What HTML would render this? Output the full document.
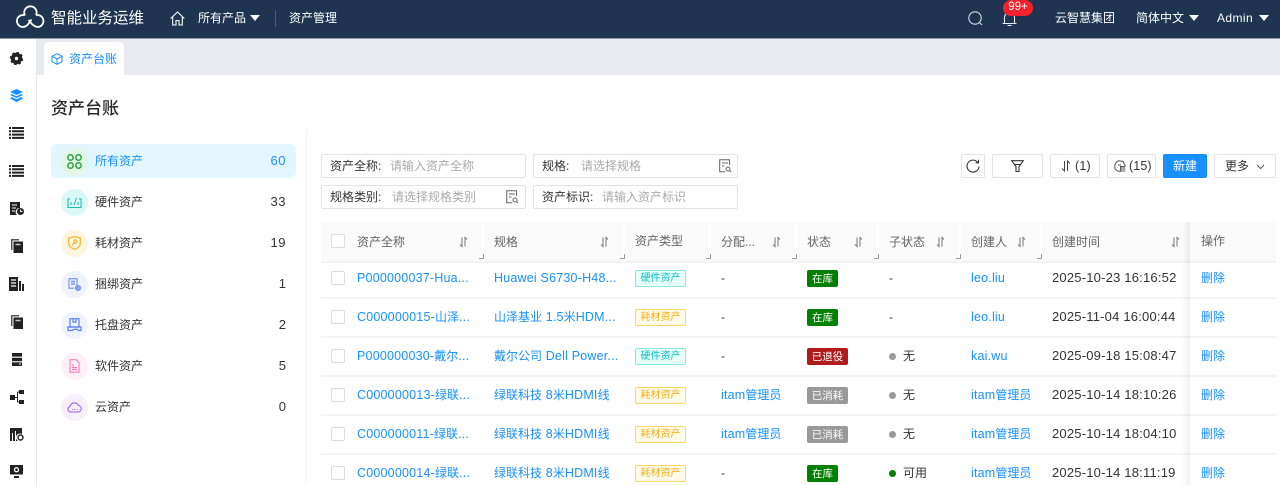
<!DOCTYPE html>
<html lang="zh"><head><meta charset="utf-8"><title>资产台账</title>
<style>
html,body{margin:0;padding:0;background:#fff}
body{width:1280px;height:485px;overflow:hidden;position:relative;font-family:"Liberation Sans","Noto Sans CJK SC",sans-serif;font-size:12px;color:#333}
.a{position:absolute;white-space:nowrap;line-height:16px}
.box{position:absolute;box-sizing:border-box;border:1px solid #e3e3e3;border-radius:2px;background:#fff}
svg{position:absolute;overflow:visible}
.w{color:#fff}
.l{color:#1890ff;letter-spacing:.2px;font-size:12.5px}
.l i{font-style:normal;font-size:12px;letter-spacing:0}
.h{color:#666}
.d{letter-spacing:.2px;color:#333;font-size:13px}
.ph{color:#aaa}
.tag{position:absolute;box-sizing:border-box;height:17px;line-height:16px;font-size:10px;border-radius:2px;border:1px solid;text-align:center;width:51px;left:635px}
.t{color:#13c2c2;border-color:#87e8de;background:#e6fffb}
.o{color:#faad14;border-color:#ffd666;background:#fffbe6}
.st{position:absolute;box-sizing:border-box;height:17px;line-height:18px;font-size:10.5px;border-radius:2px;color:#fff;text-align:center;left:807px}
.sep{position:absolute;left:321px;width:955px;height:2px;background:#f4f4f4}
.dot{position:absolute;left:889px;width:7px;height:7px;border-radius:50%}
.cb{position:absolute;left:331px;width:14px;height:14px;box-sizing:border-box;border:1px solid #dcdcdc;border-radius:2px;background:#fff}
.c{position:absolute;left:61px;width:27px;height:27px;border-radius:50%}
.corner{position:absolute;width:5px;height:5px;border-right:1px solid #999;border-bottom:1px solid #999;box-sizing:border-box}
.vs{position:absolute;top:222px;height:40px;width:2px;background:#fff}
</style></head><body>

<!-- top bar -->
<div style="position:absolute;left:0;top:0;width:1280px;height:38px;background:#1f3451"></div>
<div style="position:absolute;left:0;top:38px;width:1280px;height:1px;background:#8d99aa"></div>
<svg style="left:16px;top:7px" width="29" height="22" viewBox="0 0 29 22" fill="none" stroke="#fff" stroke-width="1.800"><path d="M8.500 8.200A6 6 0 1 0 7 20C11 20 13 16 15.500 12.500"/><path d="M9 8.500A6.200 6.200 0 1 1 20 8.200"/><path d="M20 8.200A6 6 0 1 1 22 20C18 20 15 16 12.500 13"/></svg>
<div class="a w" style="left:51px;top:10px;font-size:15.5px;line-height:18px">智能业务运维</div>
<svg style="left:170px;top:11px" width="15" height="15" viewBox="0 0 15 15" fill="none" stroke="#fff" stroke-width="1.100"><path d="M.7 7.500 7.500 1l6.800 6.500M2.700 6v8h3.300V9.500h3V14h3.300V6"/></svg>
<div class="a w" style="left:198px;top:10px">所有产品</div>
<svg style="left:250px;top:15px" width="10" height="6"><path d="M0 0h10L5 6z" fill="#fff"/></svg>
<div style="position:absolute;left:275px;top:10px;width:1px;height:17px;background:#4d5f78"></div>
<div class="a w" style="left:289px;top:10px">资产管理</div>

<svg style="left:968px;top:11px" width="15" height="15" viewBox="0 0 15 15" fill="none" stroke="#d5dae0" stroke-width="1.100"><circle cx="7" cy="7" r="6.200"/><path d="M11.500 11.500 14 14"/></svg>
<svg style="left:1002px;top:11px" width="15" height="15" viewBox="0 0 15 15" fill="none" stroke="#e6e9ed" stroke-width="1.100"><path d="M.5 12.500h14M2.500 12.500V6.500a5 5 0 0 1 10 0v6M5.500 14.500h4"/></svg>
<div style="position:absolute;left:1003px;top:0;width:30px;height:16px;border-radius:8px;background:#f5222d;color:#fff;font-size:11.500px;line-height:15px;text-align:center">99+</div>
<div class="a w" style="left:1055px;top:10px">云智慧集团</div>
<div class="a w" style="left:1136px;top:10px">简体中文</div>
<svg style="left:1189px;top:15px" width="10" height="6"><path d="M0 0h10L5 6z" fill="#fff"/></svg>
<div class="a w" style="left:1217px;top:10px;letter-spacing:.4px">Admin</div>
<svg style="left:1259px;top:15px" width="10" height="6"><path d="M0 0h10L5 6z" fill="#fff"/></svg>

<!-- tab bar -->
<div style="position:absolute;left:37px;top:39px;width:1243px;height:36px;background:#e8eaef"></div>
<div style="position:absolute;left:44px;top:42px;width:80px;height:33px;background:#fff;border-radius:5px 5px 0 0"></div>
<svg style="left:51px;top:53px" width="12" height="12" viewBox="0 0 12 12" fill="none" stroke="#1890ff" stroke-width="1"><path d="M6 .7 11 3.300v5.400L6 11.300 1 8.700V3.300zM1 3.300 6 6l5-2.700M6 6v5.300"/></svg>
<div class="a" style="left:69px;top:51px;color:#1890ff">资产台账</div>

<!-- sidebar -->
<div style="position:absolute;left:36px;top:39px;width:1px;height:446px;background:#e9e9e9"></div>
<svg style="left:10px;top:52px" width="13" height="13" viewBox="0 0 13 13"><circle cx="6.500" cy="6.500" r="3.700" fill="none" stroke="#222" stroke-width="4"/><circle cx="6.500" cy="6.500" r="5.900" fill="none" stroke="#222" stroke-width="1.500" stroke-dasharray="2.400 2.200"/></svg>
<svg style="left:10px;top:89px" width="13" height="13" viewBox="0 0 13 13" fill="#1890ff"><path d="M6.500 0 13 3 6.500 6 0 3z"/><path d="M1.800 5 6.500 7.200 11.200 5 13 6 6.500 9 0 6z"/><path d="M1.800 8 6.500 10.200 11.200 8 13 9.500 6.500 13 0 9.500z"/></svg>
<svg style="left:9px;top:127px" width="15" height="12" fill="#222"><path d="M0 0h2v2H0zM3 0h12v2H3zM0 3.300h2v2H0zM3 3.300h12v2H3zM0 6.600h2v2H0zM3 6.600h12v2H3zM0 9.900h2v2H0zM3 9.900h12v2H3z"/></svg>
<svg style="left:9px;top:165px" width="15" height="12" fill="#222"><path d="M0 0h2v2H0zM3 0h12v2H3zM0 3.300h2v2H0zM3 3.300h12v2H3zM0 6.600h2v2H0zM3 6.600h12v2H3zM0 9.900h2v2H0zM3 9.900h12v2H3z"/></svg>
<svg style="left:10px;top:202px" width="14" height="13" viewBox="0 0 14 13"><path d="M0 0h10v6a4 4 0 0 0-3 7H0z" fill="#222"/><path d="M2 3h5M2 6h4M2 9h3" stroke="#fff" stroke-width="1"/><circle cx="10.500" cy="9.500" r="3.500" fill="#222"/><path d="M10.500 7.500v2h2" stroke="#fff" fill="none" stroke-width=".9"/></svg>
<svg style="left:11px;top:239px" width="12" height="14" viewBox="0 0 12 14"><path d="M0 0h8v1.500H1.500V11H0z" fill="#555"/><path d="M2.500 2.500H12V14H2.500z" fill="#222"/><path d="M4.500 5.500h5" stroke="#ccc" stroke-width="1.500"/></svg>
<svg style="left:9px;top:277px" width="15" height="14" viewBox="0 0 15 14" fill="#222"><path d="M0 0h9v14H0z"/><path d="M10 4h2v10h-2zM13 7h2v7h-2z"/><path d="M2 3h5M2 6h5M2 9h5" stroke="#fff" stroke-width="1.200"/></svg>
<svg style="left:11px;top:315px" width="12" height="14" viewBox="0 0 12 14"><path d="M0 0h8v1.500H1.500V11H0z" fill="#555"/><path d="M2.500 2.500H12V14H2.500z" fill="#222"/><path d="M4.500 5.500h5" stroke="#ccc" stroke-width="1.500"/></svg>
<svg style="left:12px;top:353px" width="10" height="13" fill="#222"><path d="M0 0h10v3.600H0zM0 4.700h10v3.600H0zM0 9.400h10V13H0z"/><path d="M7 11h2" stroke="#fff"/></svg>
<svg style="left:10px;top:390px" width="14" height="14" fill="#222"><path d="M0 5h5v5H0zM9 0h5v4H9zM9 10h5v4H9z"/><path d="M5 7.500h2.500M7.500 2v10M7.500 2H9M7.500 12H9" stroke="#222" fill="none"/></svg>
<svg style="left:10px;top:428px" width="14" height="13" viewBox="0 0 14 13"><path d="M0 0h12v6a4 4 0 0 0-4 7H0z" fill="#222"/><path d="M2.500 5v8M5.500 3v10" stroke="#fff" stroke-width="1"/><circle cx="10.500" cy="9.500" r="2.500" fill="#fff" stroke="#222" stroke-width="1.400"/></svg>
<svg style="left:10px;top:465px" width="13" height="13" viewBox="0 0 13 13"><path d="M0 0h13v9.500H0z" fill="#222"/><path d="M4 12h5" stroke="#222" stroke-width="2"/><circle cx="6.500" cy="4.700" r="2" fill="none" stroke="#fff" stroke-width="1.300"/></svg>

<!-- title -->
<div class="a" style="left:51px;top:99px;font-size:17px;line-height:20px;color:#2b2b2b;font-weight:500">资产台账</div>
<div style="position:absolute;left:306px;top:130px;width:1px;height:355px;background:#f2f2f2"></div>

<!-- left list -->
<div style="position:absolute;left:51px;top:144px;width:245px;height:34px;background:#e2f6fe;border-radius:6px"></div>
<div class="c" style="top:148px;background:#e2f8e4"></div>
<svg style="left:67px;top:154px" width="15" height="15" fill="none" stroke="#2ea043" stroke-width="1.500"><circle cx="3.500" cy="3.500" r="2.700"/><circle cx="11.500" cy="3.500" r="2.700"/><circle cx="3.500" cy="11.500" r="2.700"/><circle cx="11.500" cy="11.500" r="2.700"/></svg>
<div class="a" style="left:95px;top:153px;color:#1890ff">所有资产</div>
<div class="a" style="right:994px;top:153px;color:#1890ff;letter-spacing:.5px;font-size:13px">60</div>

<div class="c" style="top:189px;background:#d9f9f8"></div>
<svg style="left:67px;top:196px" width="15" height="13" fill="none" stroke="#1fb5b0" stroke-width="1"><path d="M3 3H1v8.500h13V3h-2"/><path d="M4 9V6M7 9 9.500 2M11 9V6"/></svg>
<div class="a" style="left:95px;top:194px">硬件资产</div>
<div class="a" style="right:994px;top:194px;letter-spacing:.5px;font-size:13px">33</div>

<div class="c" style="top:230px;background:#fff4dd"></div>
<svg style="left:68px;top:236px" width="13" height="14" fill="none" stroke="#f2b632" stroke-width="1.200"><path d="M.7 2 6.500.7 12.300 2v5.500c0 3-3 5-5.800 5.800C3.700 12.500.7 10.500.7 7.500z"/><circle cx="7.500" cy="5.500" r="1.600"/><path d="M6.300 6.800 4 9.200"/></svg>
<div class="a" style="left:95px;top:235px">耗材资产</div>
<div class="a" style="right:994px;top:235px;letter-spacing:.5px;font-size:13px">19</div>

<div class="c" style="top:271px;background:#eef3ff"></div>
<svg style="left:68px;top:278px" width="13" height="13" fill="none" stroke="#6d8df0" stroke-width="1.100"><path d="M1 .7h8v8.500M1 .7v9.500h5"/><path d="M3 3.500h4M3 6h4" stroke-width="1.500"/><circle cx="10" cy="10" r="2.500" fill="#8aa5f5"/></svg>
<div class="a" style="left:95px;top:276px">捆绑资产</div>
<div class="a" style="right:994px;top:276px;font-size:13px">1</div>

<div class="c" style="top:312px;background:#eef3ff"></div>
<svg style="left:67px;top:318px" width="15" height="15" fill="none" stroke="#5b7cf0" stroke-width="1.200"><path d="M3 .7h9V9H3zM6 .7V4h3V.7"/><path d="M1 9h13v3.500h-2.500a2 2 0 0 0-3-1 2 2 0 0 0-3 1H1z"/></svg>
<div class="a" style="left:95px;top:317px">托盘资产</div>
<div class="a" style="right:994px;top:317px;font-size:13px">2</div>

<div class="c" style="top:353px;background:#ffeff6"></div>
<svg style="left:69px;top:359px" width="11" height="14" fill="none" stroke="#f57eb6" stroke-width="1.100"><path d="M1 .7h6l3 3v9.500H1z"/><path d="M3 6h2M3 8.500h5M3 10.500h5" stroke-width="1.200"/></svg>
<div class="a" style="left:95px;top:358px">软件资产</div>
<div class="a" style="right:994px;top:358px;font-size:13px">5</div>

<div class="c" style="top:394px;background:#f6effe"></div>
<svg style="left:67px;top:401px" width="15" height="12" fill="none" stroke="#9b62ea" stroke-width="1.100"><path d="M3.500 11A2.800 2.800 0 0 1 3 5.500 4.500 4.500 0 0 1 11.500 4.500 3.300 3.300 0 0 1 11.500 11z"/><path d="M5 8.500h.8M7.200 8.500H8M9.500 8.500h.8" stroke-width="1"/></svg>
<div class="a" style="left:95px;top:399px">云资产</div>
<div class="a" style="right:994px;top:399px;font-size:13px">0</div>

<!-- filters -->
<div class="box" style="left:321px;top:154px;width:205px;height:24px"></div>
<div class="a" style="left:330px;top:158px">资产全称:</div><div class="a ph" style="left:390px;top:158px">请输入资产全称</div>
<div class="box" style="left:533px;top:154px;width:205px;height:24px"></div>
<div class="a" style="left:542px;top:158px">规格:</div><div class="a ph" style="left:581px;top:158px">请选择规格</div>
<svg style="left:719px;top:159px" width="13" height="14" fill="none" stroke="#666" stroke-width="1"><path d="M10.500 6V.7H.7v12h5.500M3 4h6M3 7h2.500"/><circle cx="9" cy="10" r="2"/><path d="M10.500 11.500l1.500 1.500"/></svg>
<div class="box" style="left:321px;top:185px;width:205px;height:24px"></div>
<div class="a" style="left:330px;top:189px">规格类别:</div><div class="a ph" style="left:392px;top:189px">请选择规格类别</div>
<svg style="left:506px;top:190px" width="13" height="14" fill="none" stroke="#666" stroke-width="1"><path d="M10.500 6V.7H.7v12h5.500M3 4h6M3 7h2.500"/><circle cx="9" cy="10" r="2"/><path d="M10.500 11.500l1.500 1.500"/></svg>
<div class="box" style="left:533px;top:185px;width:205px;height:24px"></div>
<div class="a" style="left:542px;top:189px">资产标识:</div><div class="a ph" style="left:602px;top:189px">请输入资产标识</div>

<!-- buttons -->
<div class="box" style="left:961px;top:154px;width:24px;height:24px"></div>
<svg style="left:966px;top:159px" width="14" height="14" fill="none" stroke="#333" stroke-width="1.100"><path d="M11.800 3.500A6 6 0 1 0 13 7.500"/><path d="M12.500 .8v3h-3"/></svg>
<div class="box" style="left:992px;top:154px;width:51px;height:24px"></div>
<svg style="left:1011px;top:160px" width="13" height="12" fill="none" stroke="#333" stroke-width="1.100"><path d="M.7.700h11.600L8 6.500v5H5v-5zM3.500 4.500h6"/></svg>
<div class="box" style="left:1050px;top:154px;width:50px;height:24px"></div>
<svg style="left:1061px;top:160px" width="10" height="12" fill="none" stroke="#444" stroke-width="1"><path d="M3.500 1v10L1 8.500M6.500 11V1L9 3.500"/></svg>
<div class="a" style="left:1075px;top:158px;font-size:12.5px;letter-spacing:.2px">(1)</div>
<div class="box" style="left:1107px;top:154px;width:49px;height:24px"></div>
<svg style="left:1114px;top:160px" width="12" height="12" fill="none" stroke="#555" stroke-width="1"><path d="M5 .7 9 1.500 11 5v1.500H6.500v4.800H4L1 9 .7 5 2.500 2z"/><path d="M6 7h5.300M6 9h5.300M6 11h5.300M4 5h3" stroke-width=".9"/></svg>
<div class="a" style="left:1129px;top:158px;font-size:12.5px;letter-spacing:.1px">(15)</div>
<div style="position:absolute;left:1163px;top:154px;width:44px;height:24px;background:#1890ff;border-radius:2px;color:#fff;text-align:center;line-height:24px">新建</div>
<div class="box" style="left:1214px;top:154px;width:62px;height:24px"></div>
<div class="a" style="left:1225px;top:158px">更多</div>
<svg style="left:1256px;top:164px" width="9" height="6" fill="none" stroke="#555" stroke-width="1"><path d="M1 1l3.500 3.500L8 1"/></svg>

<!-- table header -->
<div style="position:absolute;left:321px;top:222px;width:955px;height:40px;background:#fafafa"></div>
<div style="position:absolute;left:321px;top:261px;width:955px;height:2px;background:#f2f2f2"></div>
<div class="vs" style="left:482px"></div><div class="vs" style="left:623px"></div><div class="vs" style="left:709px"></div><div class="vs" style="left:795px"></div><div class="vs" style="left:877px"></div><div class="vs" style="left:959px"></div><div class="vs" style="left:1040px"></div>
<div class="corner" style="left:479px;top:254px"></div><div class="corner" style="left:620px;top:254px"></div><div class="corner" style="left:706px;top:254px"></div><div class="corner" style="left:792px;top:254px"></div><div class="corner" style="left:874px;top:254px"></div><div class="corner" style="left:956px;top:254px"></div><div class="corner" style="left:1037px;top:254px"></div>
<div class="cb" style="top:234px"></div>
<div class="a h" style="left:357px;top:234px">资产全称</div>
<div class="a h" style="left:494px;top:234px">规格</div>
<div class="a h" style="left:635px;top:233px">资产类型</div>
<div class="a h" style="left:721px;top:234px">分配...</div>
<div class="a h" style="left:807px;top:234px">状态</div>
<div class="a h" style="left:889px;top:234px">子状态</div>
<div class="a h" style="left:971px;top:234px">创建人</div>
<div class="a h" style="left:1052px;top:234px">创建时间</div>
<div class="a h" style="left:1201px;top:233px">操作</div>
<svg style="left:459px;top:237px" width="9" height="10" fill="none" stroke="#777"><path d="M3 .5v9L1 7.500M6 9.500v-9l2 2"/></svg>
<svg style="left:600px;top:237px" width="9" height="10" fill="none" stroke="#777"><path d="M3 .5v9L1 7.500M6 9.500v-9l2 2"/></svg>
<svg style="left:772px;top:237px" width="9" height="10" fill="none" stroke="#777"><path d="M3 .5v9L1 7.500M6 9.500v-9l2 2"/></svg>
<svg style="left:854px;top:237px" width="9" height="10" fill="none" stroke="#777"><path d="M3 .5v9L1 7.500M6 9.500v-9l2 2"/></svg>
<svg style="left:936px;top:237px" width="9" height="10" fill="none" stroke="#777"><path d="M3 .5v9L1 7.500M6 9.500v-9l2 2"/></svg>
<svg style="left:1017px;top:237px" width="9" height="10" fill="none" stroke="#777"><path d="M3 .5v9L1 7.500M6 9.500v-9l2 2"/></svg>
<svg style="left:1171px;top:237px" width="9" height="10" fill="none" stroke="#777"><path d="M3 .5v9L1 7.500M6 9.500v-9l2 2"/></svg>

<!-- rows -->
<div class="sep" style="top:297px"></div><div class="sep" style="top:336px"></div><div class="sep" style="top:375px"></div><div class="sep" style="top:414px"></div><div class="sep" style="top:453px"></div>

<div class="cb" style="top:271px"></div>
<div class="a l" style="left:357px;top:270px">P000000037-Hua...</div>
<div class="a l" style="left:494px;top:270px">Huawei S6730-H48...</div>
<div class="tag t" style="top:270px">硬件资产</div>
<div class="a" style="left:721px;top:270px">-</div>
<div class="st" style="top:270px;width:31px;background:#008000">在库</div>
<div class="a" style="left:889px;top:270px">-</div>
<div class="a l" style="left:971px;top:270px">leo.liu</div>
<div class="a d" style="left:1052px;top:270px">2025-10-23 16:16:52</div>
<div class="a" style="left:1201px;top:270px;color:#1890ff">删除</div>

<div class="cb" style="top:310px"></div>
<div class="a l" style="left:357px;top:309px">C000000015-<i>山泽</i>...</div>
<div class="a l" style="left:494px;top:309px"><i>山泽基业</i> 1.5<i>米</i>HDM...</div>
<div class="tag o" style="top:309px">耗材资产</div>
<div class="a" style="left:721px;top:309px">-</div>
<div class="st" style="top:309px;width:31px;background:#008000">在库</div>
<div class="a" style="left:889px;top:309px">-</div>
<div class="a l" style="left:971px;top:309px">leo.liu</div>
<div class="a d" style="left:1052px;top:309px">2025-11-04 16:00:44</div>
<div class="a" style="left:1201px;top:309px;color:#1890ff">删除</div>

<div class="cb" style="top:349px"></div>
<div class="a l" style="left:357px;top:348px">P000000030-<i>戴尔</i>...</div>
<div class="a l" style="left:494px;top:348px"><i>戴尔公司</i> Dell Power...</div>
<div class="tag t" style="top:348px">硬件资产</div>
<div class="a" style="left:721px;top:348px">-</div>
<div class="st" style="top:348px;width:41px;background:#b01c1c">已退役</div>
<div class="dot" style="top:353px;background:#999"></div>
<div class="a" style="left:903px;top:348px">无</div>
<div class="a l" style="left:971px;top:348px">kai.wu</div>
<div class="a d" style="left:1052px;top:348px">2025-09-18 15:08:47</div>
<div class="a" style="left:1201px;top:348px;color:#1890ff">删除</div>

<div class="cb" style="top:388px"></div>
<div class="a l" style="left:357px;top:387px">C000000013-<i>绿联</i>...</div>
<div class="a l" style="left:494px;top:387px"><i>绿联科技</i> 8<i>米</i>HDMI<i>线</i></div>
<div class="tag o" style="top:387px">耗材资产</div>
<div class="a l" style="left:721px;top:387px"><span>itam</span><i>管理员</i></div>
<div class="st" style="top:387px;width:41px;background:#999">已消耗</div>
<div class="dot" style="top:392px;background:#999"></div>
<div class="a" style="left:903px;top:387px">无</div>
<div class="a l" style="left:971px;top:387px"><span>itam</span><i>管理员</i></div>
<div class="a d" style="left:1052px;top:387px">2025-10-14 18:10:26</div>
<div class="a" style="left:1201px;top:387px;color:#1890ff">删除</div>

<div class="cb" style="top:427px"></div>
<div class="a l" style="left:357px;top:426px">C000000011-<i>绿联</i>...</div>
<div class="a l" style="left:494px;top:426px"><i>绿联科技</i> 8<i>米</i>HDMI<i>线</i></div>
<div class="tag o" style="top:426px">耗材资产</div>
<div class="a l" style="left:721px;top:426px"><span>itam</span><i>管理员</i></div>
<div class="st" style="top:426px;width:41px;background:#999">已消耗</div>
<div class="dot" style="top:431px;background:#999"></div>
<div class="a" style="left:903px;top:426px">无</div>
<div class="a l" style="left:971px;top:426px"><span>itam</span><i>管理员</i></div>
<div class="a d" style="left:1052px;top:426px">2025-10-14 18:04:10</div>
<div class="a" style="left:1201px;top:426px;color:#1890ff">删除</div>

<div class="cb" style="top:466px"></div>
<div class="a l" style="left:357px;top:465px">C000000014-<i>绿联</i>...</div>
<div class="a l" style="left:494px;top:465px"><i>绿联科技</i> 8<i>米</i>HDMI<i>线</i></div>
<div class="tag o" style="top:465px">耗材资产</div>
<div class="a" style="left:721px;top:465px">-</div>
<div class="st" style="top:465px;width:31px;background:#008000">在库</div>
<div class="dot" style="top:470px;background:#008000"></div>
<div class="a" style="left:903px;top:465px">可用</div>
<div class="a l" style="left:971px;top:465px"><span>itam</span><i>管理员</i></div>
<div class="a d" style="left:1052px;top:465px">2025-10-14 18:11:19</div>
<div class="a" style="left:1201px;top:465px;color:#1890ff">删除</div>

<!-- fixed column shadow -->
<div style="position:absolute;left:1182px;top:222px;width:8px;height:263px;background:linear-gradient(to right,rgba(0,0,0,0),rgba(0,0,0,.06))"></div>
</body></html>
